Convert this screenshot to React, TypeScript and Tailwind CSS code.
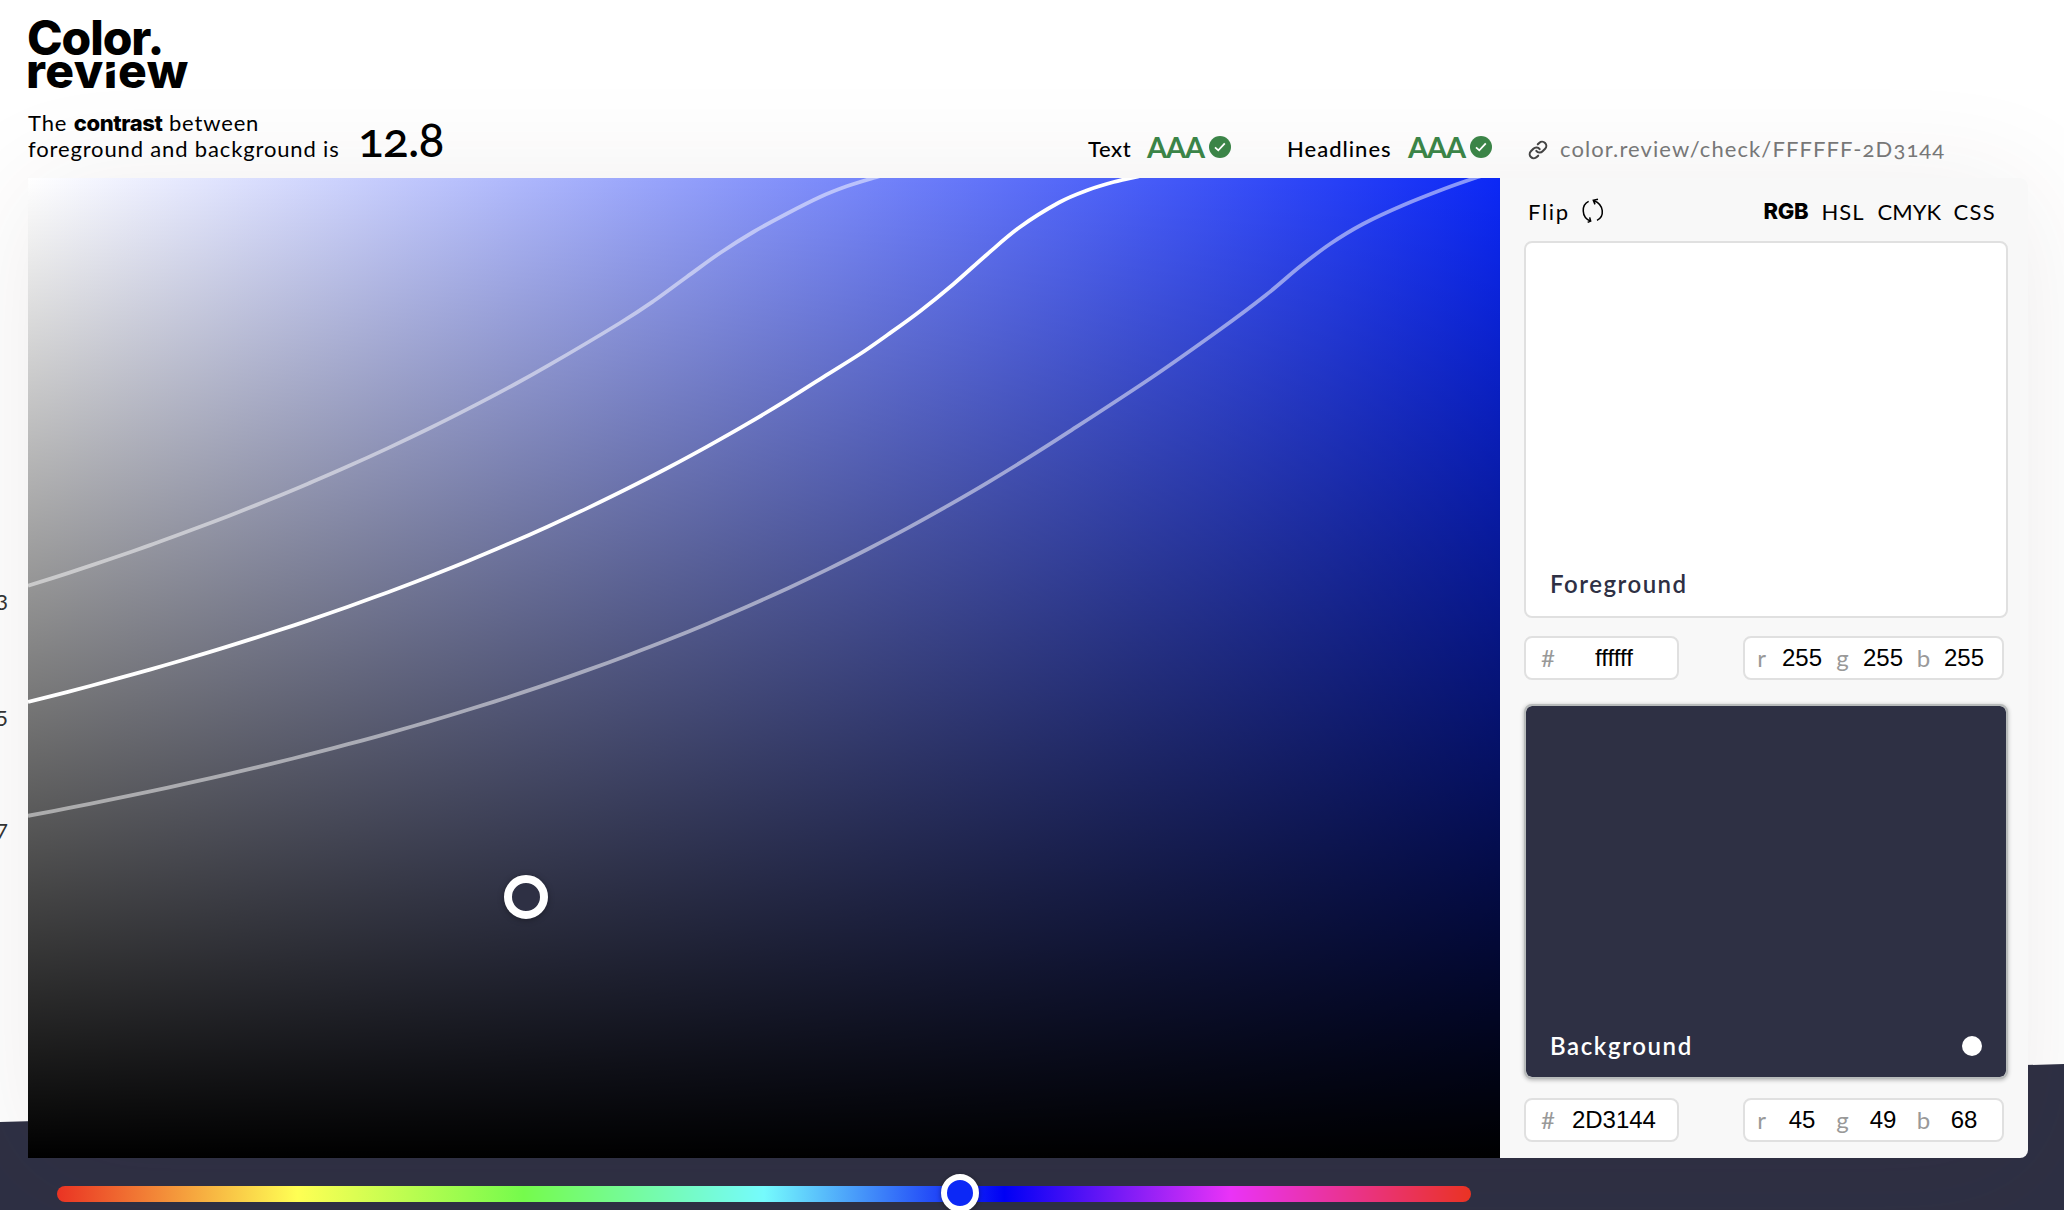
import { Link } from "lucide-react";

const WIDTH = 1472;
const HEIGHT = 980;
type Point = [number, number];

const linear = (c: number) => (c <= 0.03928 ? c / 12.92 : ((c + 0.055) / 1.055) ** 2.4);

// Relative luminance of the picker colour at saturation s and value v (hue rgb 0,44,255).
const luminance = (s: number, v: number) =>
  0.2126 * linear(v * (1 - s)) + 0.7152 * linear(v * (1 - s * (1 - 44 / 255))) + 0.0722 * linear(v);

function contour(ratio: number, until: number, tail: Point[]): string {
  const target = 1.05 / ratio - 0.05;
  const points: Point[] = [];
  for (let x = 0; x <= until; x += 40) {
    let low = 0;
    let high = 1;
    for (let i = 0; i < 30; i++) {
      const mid = (low + high) / 2;
      if (luminance(x / WIDTH, mid) < target) low = mid;
      else high = mid;
    }
    points.push([x, (1 - low) * HEIGHT]);
  }
  points.push(...tail);
  return points
    .map((p, i) => {
      if (i === 0) return `M${p[0]} ${p[1].toFixed(1)}`;
      const a = points[Math.max(i - 2, 0)];
      const b = points[i - 1];
      const d = points[Math.min(i + 1, points.length - 1)];
      const c1 = [b[0] + (p[0] - a[0]) / 6, b[1] + (p[1] - a[1]) / 6];
      const c2 = [p[0] - (d[0] - b[0]) / 6, p[1] - (d[1] - b[1]) / 6];
      return `C${c1[0].toFixed(1)} ${c1[1].toFixed(1)} ${c2[0].toFixed(1)} ${c2[1].toFixed(1)} ${p[0]} ${p[1].toFixed(1)}`;
    })
    .join("");
}

const CONTOURS = [
  { opacity: 0.5, d: contour(3, 520, [[592, 145], [625.3, 123.3], [658.7, 99], [692, 75], [725.3, 54], [758.7, 35.7], [792, 19], [818.7, 8.3], [845.3, 0], [856, -3]]) },
  { opacity: 1, d: contour(4.5, 800, [[832, 176], [860, 156.5], [892, 133.2], [925.3, 106.2], [958.7, 76.7], [992, 49], [1031, 24.5], [1060, 12], [1085.7, 4], [1112, -2]]) },
  { opacity: 0.5, d: contour(7, 1040, [[1123, 200], [1192, 151.5], [1238, 117], [1272, 88.5], [1302, 66], [1335, 46], [1375.6, 27], [1415.8, 11], [1450, -1], [1460, -4]]) },
];

function Logo() {
  return (
    <h1 className="flex flex-col font-['Inter'] text-[48px] font-extrabold leading-[33px] text-black">
      <span className="-ml-px tracking-[-1.1px]">Color.</span>
      <span className="-ml-0.5 tracking-[0.5px]">
        rev
        <span className="relative inline-block">
          ı
          <span className="absolute left-0 top-[14px] h-[3px] w-full -rotate-[18deg] bg-white" />
        </span>
        ew
      </span>
    </h1>
  );
}

function Rating({ label, labelClass }: { label: string; labelClass: string }) {
  return (
    <div className="flex items-end">
      <span className={`${labelClass} font-medium`}>{label}</span>
      <span className="mb-px w-[61.5px] text-[29px] font-bold leading-[29px] tracking-[-1.1px] text-[#3b8447]">AAA</span>
      <svg viewBox="0 0 22 22" className="mb-1 size-[22px]">
        <circle cx="11" cy="11" r="11" fill="#3b8447" />
        <path d="M6 11.3 9.3 14.3 15.8 7.3" fill="none" stroke="white" strokeWidth="1.8" />
      </svg>
    </div>
  );
}

function HexField({ value }: { value: string }) {
  return (
    <div className="flex h-11 w-[155px] items-center rounded-lg border-2 border-[#e0e0e0] bg-white pl-[15px] text-2xl">
      <span className="text-[#999]">#</span>
      <span className="ml-1 w-[110px] text-center font-['Liberation_Sans',sans-serif] text-black">{value}</span>
    </div>
  );
}

function RgbField({ values }: { values: number[] }) {
  return (
    <div className="grid h-11 w-[261px] grid-cols-[15px_66px_15px_66px_15px_66px] items-center rounded-lg border-2 border-[#e0e0e0] bg-white pl-[11px] text-2xl">
      {["r", "g", "b"].map((channel, i) => (
        <div key={channel} className="contents">
          <span className="-ml-1 text-center text-[#999]">{channel}</span>
          <span className="pr-1 text-center font-['Liberation_Sans',sans-serif] text-black">{values[i]}</span>
        </div>
      ))}
    </div>
  );
}

export default function App() {
  return (
    <div className="relative isolate h-[1210px] w-[2064px] overflow-hidden bg-white font-['Lato',sans-serif] text-[22px] leading-[25.5px] text-black">
      <div className="absolute inset-x-0 bottom-0 -z-20 h-[146px] bg-[#2e3044] [clip-path:polygon(0_58px,100%_0,100%_100%,0_100%)]" />

      <header className="flex h-[178px] flex-col pl-7">
        <div className="h-[109.5px] pt-[21px]">
          <Logo />
        </div>
        <div className="grid grid-cols-[333px_727px_200px_240px_1fr] items-end">
          <p className="whitespace-nowrap tracking-[0.85px]">
            The <strong className="font-['Inter'] font-extrabold tracking-[-0.4px]">contrast</strong> between
            <br />
            foreground and background is
          </p>
          <span className="-ml-[3px] -mb-px text-[48px] font-medium leading-[48px] tracking-[-0.9px] oldstyle-nums">12.8</span>
          <Rating label="Text" labelClass="w-[59px] tracking-[0.6px]" />
          <Rating label="Headlines" labelClass="-ml-px w-[121px] tracking-[1px]" />
          <div className="flex items-end">
            <Link className="mb-[2px] size-[20px] text-[#444]" strokeWidth={2.5} />
            <span className="ml-[12px] tracking-[1.1px] text-[#777] oldstyle-nums">color.review/check/FFFFFF-2D3144</span>
          </div>
        </div>
      </header>

      <main className="relative -z-10 ml-7 flex h-[980px] w-[2000px] rounded-lg shadow-[0_10px_120px_rgba(70,40,40,0.09)]">
        <section className="relative h-[980px] w-[1472px] overflow-hidden bg-[linear-gradient(to_bottom,transparent,black),linear-gradient(to_right,white,#0c28f6)]">
          <svg viewBox="0 0 1472 980" className="h-[980px] w-[1472px]">
            {CONTOURS.map((c) => (
              <path key={c.d} d={c.d} fill="none" stroke="white" strokeWidth="3.8" opacity={c.opacity} />
            ))}
          </svg>
          <div className="absolute left-[476px] top-[697px] size-11 rounded-full border-8 border-white bg-[#2e3044] shadow-[0_1px_6px_rgba(0,0,0,0.35)]" />
        </section>

        <aside className="flex h-[980px] w-[528px] flex-col rounded-r-lg bg-[#f8f8f8] pl-6">
          <div className="flex h-[63px] items-center pl-1 pr-[32px] pt-[5px]">
            <span className="w-[53px] tracking-[1.7px]">Flip</span>
            <svg viewBox="184 200 72 84" className="h-7 w-6 -translate-y-px" fill="none" stroke="black" strokeWidth="4.6">
              <path d="M207 213C185 223 184 260 212 272M204 276 213 272 210 261" />
              <path d="M232 270C255 259 254 223 223 211M235 207 221 210 226 222" />
            </svg>
            <nav className="ml-auto flex items-center">
              <span className="w-[58px] font-['Inter'] font-extrabold tracking-[-0.3px]">RGB</span>
              <span className="w-[56px] tracking-[1px]">HSL</span>
              <span className="w-[76px]">CMYK</span>
              <span className="tracking-[1.3px]">CSS</span>
            </nav>
          </div>
          <div className="flex h-[377px] w-[484px] items-end rounded-lg border-2 border-[#e0e0e0] bg-white px-[24px] pb-4">
            <span className="text-2xl font-semibold tracking-[1.5px] text-[#2e3044]">Foreground</span>
          </div>
          <div className="mt-[18px] flex w-[480px] justify-between">
            <HexField value="ffffff" />
            <RgbField values={[255, 255, 255]} />
          </div>
          <div className="mt-6 flex h-[375px] w-[484px] items-end justify-between rounded-lg border-2 border-[#b8bbbb] bg-[#2e3044] bg-clip-padding px-[24px] pb-[15px] shadow-[0_1px_4px_rgba(0,0,0,0.3)]">
            <span className="text-2xl font-semibold tracking-[1.6px] text-white">Background</span>
            <span className="mb-[6px] size-5 rounded-full bg-white" />
          </div>
          <div className="mt-[19px] flex w-[480px] justify-between">
            <HexField value="2D3144" />
            <RgbField values={[45, 49, 68]} />
          </div>
        </aside>
      </main>

      <div className="relative ml-[57px] mt-7 h-4 w-[1414px] rounded-full bg-[linear-gradient(to_right,#ea3323,#ffff54_17%,#75fb4c_33%,#75fbfd_50%,#0000f5_67%,#ea33f7_83%,#ea3323)]">
        <div className="absolute -top-3 left-[884px] size-[38px] rounded-full border-[6px] border-white bg-[#0c28f6] shadow-[0_1px_5px_rgba(0,0,0,0.4)]" />
      </div>

      <span className="absolute right-[2056px] top-[589px] text-[#333]">3</span>
      <span className="absolute right-[2056px] top-[705px] text-[#333]">4.5</span>
      <span className="absolute right-[2056px] top-[818px] text-[#333]">7</span>
    </div>
  );
}
